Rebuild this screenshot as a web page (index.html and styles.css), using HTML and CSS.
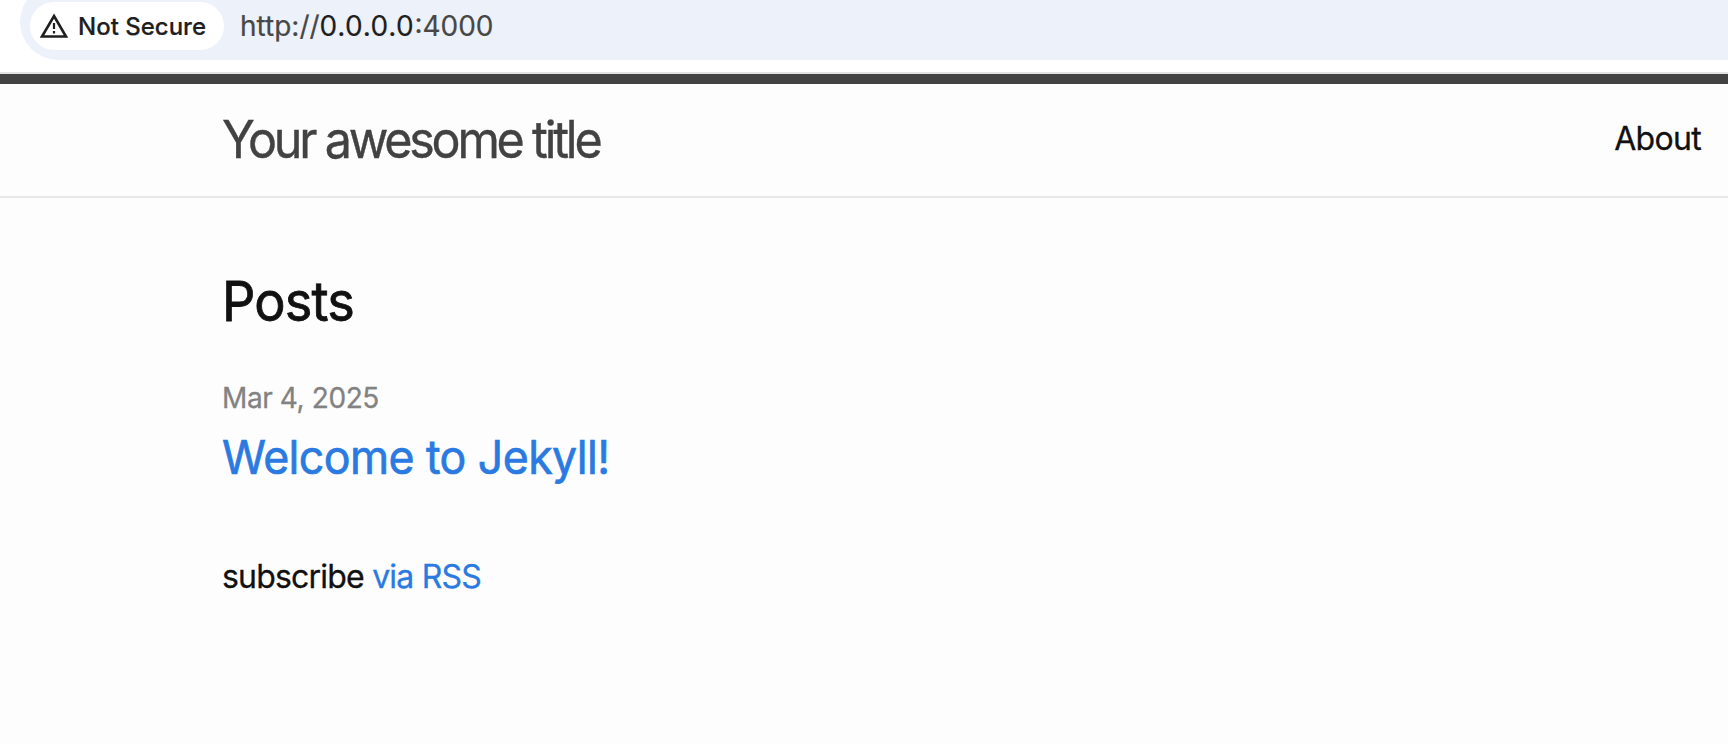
FILE: index.html
```html
<!DOCTYPE html>
<html lang="en">
<head>
<meta charset="utf-8">
<title>Your awesome title</title>
<link rel="stylesheet" href="styles.css">
</head>
<body>
<div class="toolbar">
  <div class="address">
    <div class="chip">
      <svg class="warn" viewBox="0 0 30 26" width="30" height="26"><path d="M15 3 L27 23.5 H3 Z" fill="none" stroke="#1f1f1f" stroke-width="2.6"/><path d="M15 10v6M15 18v2.4" stroke="#1f1f1f" stroke-width="2.2"/></svg>
      <span class="chip-text">Not Secure</span>
    </div>
    <div class="url">http://<span class="host">0.0.0.0</span>:4000</div>
  </div>
</div>
<header class="site-header">
  <a class="site-title">Your awesome title</a>
  <a class="nav-link">About</a>
</header>
<main class="content">
  <h2 class="posts-heading">Posts</h2>
  <div class="post-date">Mar 4, 2025</div>
  <h3 class="post-title"><a class="link">Welcome to Jekyll!</a></h3>
  <p class="subscribe"><span class="sub-label">subscribe</span> <a class="link">via RSS</a></p>
</main>
</body>
</html>
```
FILE: styles.css
```css
* { box-sizing: border-box; }
body { margin: 0; height: 744px; overflow: hidden; background: #fdfdfd; color: #111; font-family: Inter, sans-serif; }
.toolbar { height: 74px; background: #fff; border-bottom: 2px solid #e2e2e2; padding-left: 20px; overflow: hidden; }
.address { height: 76px; margin-top: -16px; background: #edf1fa; border-radius: 38px 0 0 38px; display: flex; align-items: center; padding: 8px 0 0 10px; }
.chip { height: 48px; width: 194px; background: #fff; border-radius: 24px; display: flex; align-items: center; padding-left: 9px; gap: 9px; }
.chip-text { font-size: 24px; font-weight: 500; white-space: nowrap; color: #1f1f1f; -webkit-text-stroke: 0.2px; }
.url { margin-left: 16px; font-size: 28px; color: #474747; white-space: nowrap; -webkit-text-stroke: 0.2px; }
.host { color: #1f1f1f; letter-spacing: 0.6px; }
.site-header { height: 124px; border-top: 10px solid #424242; border-bottom: 2px solid #e8e8e8; display: flex; justify-content: space-between; align-items: center; padding: 0 27px 3px 222px; }
.site-title { font-size: 51.5px; letter-spacing: -3.4px; color: #424242; transform: scaleX(0.94); transform-origin: left; -webkit-text-stroke: 0.4px; }
.nav-link { font-size: 32px; letter-spacing: -0.7px; -webkit-text-stroke: 0.3px; }
.content { padding: 61px 0 0 222px; -webkit-text-stroke: 0.3px; }
.posts-heading { margin: 0; font-size: 55px; line-height: 84px; font-weight: 400; letter-spacing: -0.9px; transform: scaleX(0.95); transform-origin: left; -webkit-text-stroke: 0.8px; }
.post-date { font-size: 28px; line-height: 42px; margin-top: 34px; color: #828282; letter-spacing: -0.4px; }
.post-title { margin: 2px 0 0; font-size: 47px; line-height: 72px; font-weight: 400; letter-spacing: -0.6px; transform: scaleX(0.95); transform-origin: left; -webkit-text-stroke: 0.7px; }
.link { color: #2a7ae2; }
.subscribe { margin: 60px 0 0; font-size: 32px; line-height: 48px; letter-spacing: -0.8px; }
```
